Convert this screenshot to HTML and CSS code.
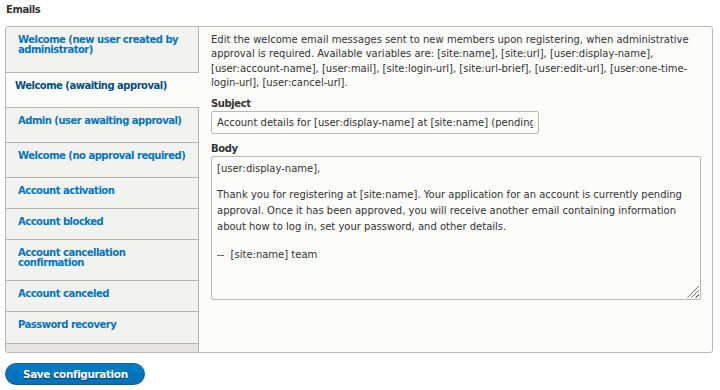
FILE: index.html
```html
<!DOCTYPE html>
<html lang="en">
<head>
  <meta charset="UTF-8" />
  <title>Account settings - Emails</title>
  <link rel="stylesheet" href="styles.css">
</head>
<body>

<div class="page">
  <h3 class="section-title">Emails</h3>

  <div class="vertical-tabs">
    <!-- Tab menu -->
    <ul class="tab-menu">
      <li class="tab-item summary first"><a href="#">Welcome (new user created by administrator)</a></li>
      <li class="tab-item summary selected"><a href="#">Welcome (awaiting approval)</a></li>
      <li class="tab-item summary"><a href="#">Admin (user awaiting approval)</a></li>
      <li class="tab-item summary"><a href="#">Welcome (no approval required)</a></li>
      <li class="tab-item"><a href="#">Account activation</a></li>
      <li class="tab-item"><a href="#">Account blocked</a></li>
      <li class="tab-item"><a href="#">Account cancellation confirmation</a></li>
      <li class="tab-item"><a href="#">Account canceled</a></li>
      <li class="tab-item last"><a href="#">Password recovery</a></li>
    </ul>

    <!-- Selected pane -->
    <div class="tab-pane">
      <p class="description">Edit the welcome email messages sent to new members upon registering, when administrative approval is required. Available variables are: [site:name], [site:url], [user:display-name], [user:account-name], [user:mail], [site:login-url], [site:url-brief], [user:edit-url], [user:one-time-login-url], [user:cancel-url].</p>

      <div class="form-group">
        <label for="mail-subject">Subject</label>
        <input type="text" id="mail-subject" value="Account details for [user:display-name] at [site:name] (pending admin approval)">
      </div>

      <div class="form-group">
        <label for="mail-body">Body</label>
        <div class="textarea" id="mail-body" role="textbox" aria-multiline="true">
          <p>[user:display-name],</p>
          <p>Thank you for registering at [site:name]. Your application for an account is currently pending approval. Once it has been approved, you will receive another email containing information about how to log in, set your password, and other details.</p>
          <p>--&nbsp; [site:name] team</p>
          <span class="grip"></span>
        </div>
      </div>
    </div>
  </div>

  <button type="submit" class="btn-primary">Save configuration</button>
</div>

</body>
</html>
```

FILE: styles.css
```css
:root {
  --text-color: #333;
  --link-color: #0074bd;
  --link-active: #004f80;
  --line-color: #b8b8b8;
  --tab-bg: #f2f2f0;
  --pane-bg: #fcfcfa;
}

body {
  margin: 0;
  font-family: "DejaVu Sans", Verdana, sans-serif;
  font-size: 10px;
  color: var(--text-color);
  background: #fff;
}

.page {
  padding: 0 7px 0 5px;
}

.section-title {
  margin: 0 0 11px;
  padding: 5px 0 0 1px;
  font-size: 10px;
  line-height: 10px;
  letter-spacing: -0.4px;
}

.vertical-tabs {
  display: flex;
  border: 1px solid var(--line-color);
  border-radius: 3px;
  background: var(--pane-bg);
  overflow: hidden;
}

.tab-menu {
  flex: none;
  width: 192px;
  margin: 0;
  padding: 0 0 8px;
  list-style: none;
  background: #e6e5e1;
  border-right: 1px solid #b3b3b3;
}

.tab-item {
  background: var(--tab-bg);
  border-bottom: 1px solid #b3b3b3;
}

.tab-item a {
  display: block;
  padding: 8px 4px 12px 12px;
  line-height: 10px;
  font-weight: bold;
  letter-spacing: -0.5px;
  color: var(--link-color);
  text-decoration: none;
}

.tab-item.summary a {
  padding-bottom: 16px;
}

.tab-item.first a {
  padding-bottom: 17px;
}

.tab-item.last a {
  padding-bottom: 13px;
}

.tab-item.selected {
  background: var(--pane-bg);
  margin-right: -1px;
}

.tab-item.selected a {
  padding-left: 9px;
  color: var(--link-active);
}

.tab-pane {
  flex: 1;
  padding: 6px 11px 0 12px;
}

.description {
  margin: 0;
  line-height: 14.4px;
}

.form-group label {
  display: block;
  margin-top: 6px;
  line-height: 14px;
  font-weight: bold;
  letter-spacing: -0.4px;
}

.form-group + .form-group label {
  margin-top: 8px;
}

input[type="text"] {
  display: block;
  width: 328px;
  height: 23px;
  box-sizing: border-box;
  margin: 0;
  padding: 0 5px;
  border: 1px solid var(--line-color);
  border-radius: 2px;
  background: var(--pane-bg);
  font: inherit;
  color: var(--text-color);
}

.textarea {
  position: relative;
  height: 144px;
  box-sizing: border-box;
  padding: 4px 5px;
  border: 1px solid var(--line-color);
  border-radius: 2px;
  background: var(--pane-bg);
  line-height: 16px;
}

.textarea p {
  margin: 0 0 10px;
}

.textarea p:nth-child(2) {
  margin-bottom: 12px;
}

.grip {
  position: absolute;
  right: 1px;
  bottom: 1px;
  width: 13px;
  height: 13px;
  background: repeating-linear-gradient(-45deg, transparent 0 2px, #777 2px 3px);
  clip-path: polygon(100% 0, 100% 100%, 0 100%);
}

.btn-primary {
  display: block;
  margin-top: 10px;
  height: 22px;
  padding: 0 16px 0 17px;
  border: 1px solid #1e5c90;
  border-radius: 20px;
  background: linear-gradient(#007bc6, #0071b8);
  color: #fff;
  font-family: inherit;
  font-size: 10.5px;
  font-weight: bold;
  letter-spacing: -0.4px;
  text-shadow: 0 1px 1px rgba(0, 0, 0, 0.5);
  cursor: pointer;
}
```
